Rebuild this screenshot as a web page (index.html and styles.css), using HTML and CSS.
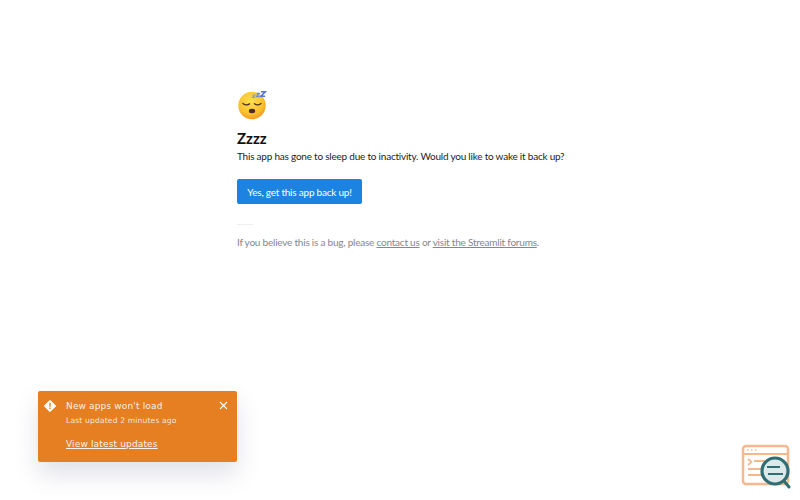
FILE: index.html
```html
<!DOCTYPE html>
<html lang="en">
<head>
<meta charset="utf-8">
<title>Zzzz</title>
<link rel="stylesheet" href="styles.css">
</head>
<body>
<main class="page">
  <svg class="emoji" width="32" height="32" viewBox="0 0 32 32" aria-hidden="true">
    <defs>
      <radialGradient id="face" cx="45%" cy="35%" r="65%">
        <stop offset="0" stop-color="#fde04e"/>
        <stop offset="0.7" stop-color="#fbc02f"/>
        <stop offset="1" stop-color="#f19b20"/>
      </radialGradient>
    </defs>
    <circle cx="15" cy="15.500" r="13.700" fill="url(#face)"/>
    <path d="M6 13.500q3 2.600 6.500.3M17.500 13.800q3 2.300 6.500-.3" fill="none" stroke="#4a3326" stroke-width="1.400" stroke-linecap="round"/>
    <ellipse cx="15" cy="21" rx="3.200" ry="2.200" fill="#4a2c20"/>
    <path d="M15.500 5h2.400l-2.400 2.400h2.400" fill="none" stroke="#8a98dc" stroke-width="1.100"/>
    <path d="M19.500 3.500h2.800l-2.800 3h2.800" fill="none" stroke="#7688dc" stroke-width="1.300"/>
    <path d="M24 1.800h4.200l-4.200 4.400h4.200" fill="none" stroke="#5a70e0" stroke-width="1.600"/>
  </svg>
  <h1 class="title">Zzzz</h1>
  <p class="lead">This app has gone to sleep due to inactivity. Would you like to wake it back up?</p>
  <button class="wake" type="button">Yes, get this app back up!</button>
  <hr class="rule">
  <p class="note">If you believe this is a bug, please <a href="#">contact us</a> or <a href="#">visit the Streamlit forums</a>.</p>
</main>

<aside class="toast">
  <svg class="toast-icon" width="12" height="12" viewBox="0 0 12 12" aria-hidden="true">
    <path d="M6 .3 11.700 6 6 11.700.3 6Z" fill="#fff" stroke="#fff" stroke-linejoin="round"/>
    <rect x="5.300" y="2.800" width="1.400" height="4" fill="#e67e22"/>
    <rect x="5.300" y="7.600" width="1.400" height="1.400" fill="#e67e22"/>
  </svg>
  <div class="toast-body">
    <div class="toast-title">New apps won't load</div>
    <div class="toast-time">Last updated 2 minutes ago</div>
    <a class="toast-link" href="#">View latest updates</a>
  </div>
  <svg class="toast-close" width="9" height="9" viewBox="0 0 9 9" aria-hidden="true">
    <path d="M1 1l7 7M8 1 1 8" stroke="#fff" stroke-width="1.100" fill="none"/>
  </svg>
</aside>

<svg class="badge" width="50" height="46" viewBox="0 0 50 46" aria-hidden="true">
  <rect x="2" y="2" width="45" height="38" rx="3" fill="#fff" stroke="#f6b88c" stroke-width="2.500"/>
  <path d="M2 10h45" stroke="#f6b88c" stroke-width="2"/>
  <path d="M6 6h1.500M10 6h1.500M14 6h1.500" stroke="#f6b88c" stroke-width="1.500"/>
  <path d="M7 15l3.500 3L7 21M13 17h11M7 25h16M7 31h14" stroke="#f6b88c" stroke-width="1.800" fill="none"/>
  <circle cx="34" cy="27" r="13" fill="#dce9ea" stroke="#2f6f73" stroke-width="3.200"/>
  <path d="M26 23h13M27 30h15" stroke="#2f6f73" stroke-width="2"/>
  <path d="M43 37l5 6" stroke="#2f6f73" stroke-width="3" stroke-linecap="round"/>
</svg>
</body>
</html>
```

FILE: styles.css
```css
* { box-sizing: border-box; }
html, body { margin: 0; height: 100%; background: #fff; }
body { position: relative; overflow: hidden; font-family: "Lato", "Noto Sans", sans-serif; }

.page { display: flex; flex-direction: column; align-items: flex-start; width: 340px; margin-left: 237px; padding-top: 90px; }
.emoji { display: block; margin-bottom: 6px; }
.title { margin: 0; font-size: 15px; line-height: 20px; font-weight: 700; color: #111; }
.lead { margin: 0; font-size: 10px; line-height: 16px; letter-spacing: -.22px; color: #1c1d24; white-space: nowrap; }
.wake { margin-top: 15px; height: 25px; width: 125px; padding: 0; border: 0; border-radius: 2px; background: #1c83e1; color: #fff; font: 10px "Lato", sans-serif; letter-spacing: -.22px; }
.rule { width: 16px; height: 1px; margin: 20px 0 0; border: 0; background: #eeeeee; }
.note { margin: 10px 0 0; font-size: 10px; line-height: 14px; letter-spacing: -.22px; color: #85868f; white-space: nowrap; }
.note a { color: inherit; }

.toast { position: absolute; left: 38px; top: 391px; width: 199px; height: 71px; display: flex; align-items: flex-start; padding: 9px 9px 0 6px; background: #e67e22; border-radius: 2px; box-shadow: 0 12px 24px rgba(60, 70, 110, .16); color: rgba(255, 255, 255, .92); font-family: "DejaVu Sans", sans-serif; }
.toast-icon { flex: none; }
.toast-body { flex: 1; margin-left: 10px; letter-spacing: .15px; }
.toast-title { font-size: 9px; line-height: 12px; }
.toast-time { margin-top: 3px; font-size: 7.600px; line-height: 11px; opacity: .9; }
.toast-link { display: block; margin-top: 12px; font-size: 9px; line-height: 12px; color: inherit; }
.toast-close { margin-top: 1px; flex: none; }

.badge { position: absolute; left: 741px; top: 444px; }
```
